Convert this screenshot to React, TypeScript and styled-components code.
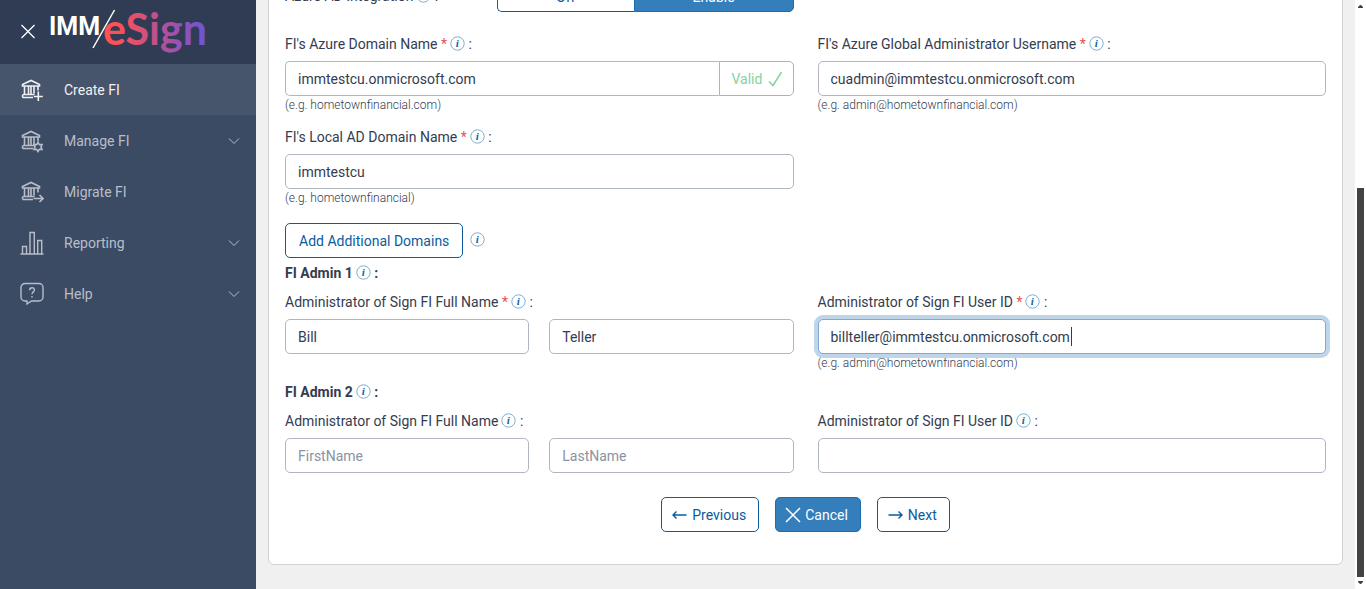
import React from "react";
import styled, { createGlobalStyle, css } from "styled-components";

const GlobalStyle = createGlobalStyle`
  *, *::before, *::after { box-sizing: border-box; }
  body {
    margin: 0;
    background: #f0f0f0;
    color: #343c50;
    font: 400 14px/20px Roboto, "Liberation Sans", sans-serif;
  }
  button, input { font: inherit; }
`;

const Shell = styled.div`
  display: flex;
  height: 100vh;
  overflow: hidden;
`;

const Sidebar = styled.aside`
  flex: 0 0 256px;
  background: #3c4b64;
`;

const Brand = styled.header`
  display: flex;
  align-items: center;
  height: 64px;
  padding-left: 20px;
  background: #303c54;
`;

const CloseButton = styled.button`
  display: flex;
  width: 16px;
  height: 16px;
  padding: 0;
  border: 0;
  background: none;
  color: #fff;
`;

const Logo = styled.svg`
  margin-left: 12px;
`;

const NavItem = styled.a<{ $active?: boolean }>`
  display: flex;
  align-items: center;
  height: 51px;
  padding: 0 16px 0 20px;
  color: ${(p) => (p.$active ? "#f0f1f4" : "#b8bec9")};
  background: ${(p) => (p.$active ? "#46546c" : "transparent")};
  text-decoration: none;
`;

const NavText = styled.span`
  flex: 1;
  margin-left: 20px;
`;

const Main = styled.main`
  flex: 1;
  display: flex;
  flex-direction: column;
  justify-content: flex-end;
  min-width: 0;
  padding: 0 12px 24px;
`;

const Card = styled.form`
  padding: 16px 16px 32px;
  background: #fff;
  border: 1px solid #d0d2d6;
  border-radius: 6px;
`;

const Columns = styled.div<{ $top?: number }>`
  display: grid;
  grid-template-columns: 1fr 1fr;
  column-gap: 24px;
  margin-top: ${(p) => p.$top ?? 0}px;
`;

const Label = styled.label`
  display: flex;
  align-items: center;
  height: 24px;
  margin-bottom: 5px;
  white-space: pre;
`;

const ToggleField = styled.div`
  display: grid;
  grid-template-columns: 5fr 7fr;
  align-items: center;
  ${Label} { margin-bottom: 2px; }
`;

const Toggle = styled.div`
  display: grid;
  grid-template-columns: 137fr 160fr;
`;

const buttonBase = css`
  height: 35px;
  border: 1px solid #0a5c9e;
  border-radius: 5px;
  background: #fff;
  color: #0a5c9e;
`;

const primary = css`
  background: #337ebb;
  border-color: #1c6cae;
  color: #fff;
`;

const ToggleButton = styled.button<{ $on?: boolean }>`
  ${buttonBase}
  ${(p) => (p.$on ? primary : "")}
  height: 30px;
  border-radius: ${(p) => (p.$on ? "0 5px 5px 0" : "5px 0 0 5px")};
  ${(p) => (p.$on ? "" : "border-right: 0;")}
`;

const Required = styled.span`
  color: #e55353;
`;

const SectionTitle = styled.h2<{ $top: number }>`
  display: flex;
  align-items: center;
  height: 24px;
  margin: ${(p) => p.$top}px 0 5px;
  font-size: 14px;
  font-weight: 700;
  white-space: pre;
`;

const InfoMark = styled.svg`
  flex: none;
  margin: 0 0 2px 3px;
`;

const Input = styled.input`
  display: block;
  width: 100%;
  min-width: 0;
  height: 35px;
  padding: 0 12px;
  border: 1px solid #b1b7c1;
  border-radius: 5px;
  background: #fff;
  color: #343c50;
  outline: 0;
  &::placeholder { color: #8a93a2; opacity: 1; }
  &:focus {
    border-color: #7fabd3;
    box-shadow: 0 0 0 4px #bfd6ea;
  }
`;

const CaretField = styled.div`
  position: relative;
  ${Input} { caret-color: transparent; }
`;

const Caret = styled.span`
  position: absolute;
  top: 8px;
  left: 253px;
  width: 1px;
  height: 19px;
  background: #343c50;
`;

const InputGroup = styled.div`
  display: flex;
  ${Input} {
    flex: 1;
    border-right: 0;
    border-radius: 5px 0 0 5px;
  }
`;

const Valid = styled.span`
  display: flex;
  align-items: center;
  gap: 6px;
  width: 75px;
  padding-left: 12px;
  border: 1px solid #7fd09b;
  border-radius: 0 5px 5px 0;
  color: #83d49e;
`;

const Hint = styled.small`
  display: block;
  height: 18px;
  font-size: 12px;
  line-height: 18px;
  font-weight: 300;
`;

const NameRow = styled.div`
  display: grid;
  grid-template-columns: 1fr 1fr;
  gap: 20px;
`;

const DomainRow = styled.div`
  display: flex;
  align-items: center;
  gap: 4px;
  margin-top: 16px;
`;

const Button = styled.button<{ $primary?: boolean }>`
  ${buttonBase}
  ${(p) => (p.$primary ? primary : "")}
  display: flex;
  align-items: center;
  gap: 4px;
  padding: 0 12px 0 9px;
`;

const PlainButton = styled.button`
  ${buttonBase}
  padding: 0 13px;
`;

const Actions = styled.div`
  display: flex;
  justify-content: center;
  gap: 16px;
  margin-top: 24px;
`;

const ScrollTrack = styled.div`
  flex: 0 0 11px;
  display: flex;
  flex-direction: column;
  align-items: center;
  justify-content: space-between;
  padding: 4px 0;
  background: #fff;
`;

const ScrollThumb = styled.div`
  width: 7px;
  height: 67%;
  margin: auto 0 4px;
  background: #424242;
`;

const Info = () => (
  <InfoMark width="15" height="15" viewBox="0 0 15 15" aria-hidden="true">
    <circle cx="7.5" cy="7.5" r="6.7" fill="none" stroke="#7fafcc" strokeWidth="1" />
    <text x="7.3" y="11" textAnchor="middle" fontFamily="Liberation Serif, serif" fontSize="11" fontWeight="700" fontStyle="italic" fill="#0a66a8">i</text>
  </InfoMark>
);

type LabelProps = { htmlFor?: string; required?: boolean; children: string };
const FieldLabel = ({ htmlFor, required, children }: LabelProps) => (
  <Label htmlFor={htmlFor}>
    {children}
    {required && <Required> *</Required>}
    <Info /> :
  </Label>
);

const Bank = ({ kind }: { kind: "add" | "manage" | "migrate" }) => (
  <svg width="24" height="24" viewBox="0 0 24 24" fill="none" stroke="currentColor" strokeWidth="1.6">
    <path d="M2.500 8V6.600L11 2.500l8.500 4.100V8zM4.500 8v8.500M8.500 8v8.500M11 8v8.500M14 8v7.500M18 8v4.500M3 16.500h11.500M2.500 19.500h10.500M2.600 16.500v3" />
    {kind === "add" && <path d="M18.300 13.500v9.500M13.800 18.500h9" />}
    {kind === "migrate" && <path d="M13.500 18.500h9.500M19.500 15l3.500 3.500-3.500 3.500" />}
    {kind === "manage" && (
      <path d="M18 13.500l1.400 2.100 2.600-.1-1 2.500 1 2.500-2.600-.1L18 22.500l-1.400-2.100-2.600.1 1-2.500-1-2.500 2.600.1z" />
    )}
  </svg>
);

const Chart = () => (
  <svg width="24" height="24" viewBox="0 0 24 24" fill="none" stroke="currentColor" strokeWidth="1.4">
    <path d="M.5 23h23M2.500 23v-7.500h4V23M10 23V1.500h4.300V23M17.700 23V9.500h4V23" />
  </svg>
);

const Help = () => (
  <svg width="24" height="24" viewBox="0 0 24 24" fill="none" stroke="currentColor" strokeWidth="1.4">
    <path d="M5 1.500h14a4 4 0 0 1 4 4v9.500a4 4 0 0 1-4 4h-7.500l-4.500 3v-3H5a4 4 0 0 1-4-4V5.500a4 4 0 0 1 4-4z" />
    <path d="M9.700 8.200c0-3.300 4.800-3.200 4.700-.2 0 1.900-2.400 1.900-2.400 4.300M12 14v1.500" />
  </svg>
);

const Chevron = () => (
  <svg width="12" height="12" viewBox="0 0 12 12" fill="none" stroke="currentColor" strokeWidth="1">
    <path d="M1 3.500l5 5 5-5" />
  </svg>
);

const Arrow = ({ left }: { left?: boolean }) => (
  <svg width="17" height="16" viewBox="0 0 17 16" fill="none" stroke="currentColor" strokeWidth="1.400">
    <path d={left ? "M15.500 8H2M5.500 4.500L2 8l3.500 3.500" : "M1.500 8H15M11.500 4.500L15 8l-3.500 3.500"} />
  </svg>
);

const nav = [
  { text: "Create FI", icon: <Bank kind="add" />, active: true },
  { text: "Manage FI", icon: <Bank kind="manage" />, more: true },
  { text: "Migrate FI", icon: <Bank kind="migrate" /> },
  { text: "Reporting", icon: <Chart />, more: true },
  { text: "Help", icon: <Help />, more: true },
];

export default function App() {
  return (
    <>
      <GlobalStyle />
      <Shell>
        <Sidebar>
          <Brand>
            <CloseButton aria-label="Close menu">
              <svg width="16" height="16" viewBox="0 0 16 16" stroke="currentColor" strokeWidth="1.300">
                <path d="M1.500 1l13 13M14.500 1l-13 13" />
              </svg>
            </CloseButton>
            <Logo width="180" height="64" viewBox="0 0 180 64" role="img" aria-label="IMM eSign">
              <defs>
                <linearGradient id="sign" gradientUnits="userSpaceOnUse" x1="56" y1="0" x2="158" y2="0">
                  <stop offset="0.15" stopColor="#ff5055" />
                  <stop offset="0.6" stopColor="#b0509f" />
                  <stop offset="1" stopColor="#6a55d8" />
                </linearGradient>
              </defs>
              <text x="1" y="35" fontFamily="Roboto, sans-serif" fontWeight="700" fontSize="25" fill="#fff">IMM</text>
              <path d="M66.500 10L45 48" stroke="#fff" strokeWidth="1.500" />
              <text x="55" y="45" fontFamily="Lato, sans-serif" fontWeight="700" fontSize="43" fill="url(#sign)">eSign</text>
            </Logo>
          </Brand>
          <nav>
            {nav.map((item) => (
              <NavItem key={item.text} href="#" $active={item.active}>
                {item.icon}
                <NavText>{item.text}</NavText>
                {item.more && <Chevron />}
              </NavItem>
            ))}
          </nav>
        </Sidebar>

        <Main>
          <Card>
            <Columns>
              <ToggleField>
                <FieldLabel>Azure AD Integration</FieldLabel>
                <Toggle>
                  <ToggleButton type="button">Off</ToggleButton>
                  <ToggleButton type="button" $on>Enable</ToggleButton>
                </Toggle>
              </ToggleField>
            </Columns>

            <Columns $top={20}>
              <div>
                <FieldLabel htmlFor="azure" required>FI's Azure Domain Name</FieldLabel>
                <InputGroup>
                  <Input id="azure" defaultValue="immtestcu.onmicrosoft.com" />
                  <Valid>
                    Valid
                    <svg width="15" height="16" viewBox="0 0 15 16" fill="none" stroke="currentColor" strokeWidth="1.500">
                      <path d="M1 10.500l4 4L13.500 1" />
                    </svg>
                  </Valid>
                </InputGroup>
                <Hint>(e.g. hometownfinancial.com)</Hint>
              </div>
              <div>
                <FieldLabel htmlFor="global" required>FI's Azure Global Administrator Username</FieldLabel>
                <Input id="global" defaultValue="cuadmin@immtestcu.onmicrosoft.com" />
                <Hint>(e.g. admin@hometownfinancial.com)</Hint>
              </div>
            </Columns>

            <Columns $top={11}>
              <div>
                <FieldLabel htmlFor="local" required>FI's Local AD Domain Name</FieldLabel>
                <Input id="local" defaultValue="immtestcu" />
                <Hint>(e.g. hometownfinancial)</Hint>
              </div>
            </Columns>

            <DomainRow>
              <PlainButton type="button">Add Additional Domains</PlainButton>
              <Info />
            </DomainRow>

            <SectionTitle $top={3}>FI Admin 1<Info /> :</SectionTitle>
            <Columns>
              <div>
                <FieldLabel htmlFor="first1" required>Administrator of Sign FI Full Name</FieldLabel>
                <NameRow>
                  <Input id="first1" defaultValue="Bill" />
                  <Input aria-label="Last name" defaultValue="Teller" />
                </NameRow>
              </div>
              <div>
                <FieldLabel htmlFor="user1" required>Administrator of Sign FI User ID</FieldLabel>
                <CaretField>
                  <Input id="user1" defaultValue="billteller@immtestcu.onmicrosoft.com" autoFocus />
                  <Caret />
                </CaretField>
                <Hint>(e.g. admin@hometownfinancial.com)</Hint>
              </div>
            </Columns>

            <SectionTitle $top={8}>FI Admin 2<Info /> :</SectionTitle>
            <Columns>
              <div>
                <FieldLabel htmlFor="first2">Administrator of Sign FI Full Name</FieldLabel>
                <NameRow>
                  <Input id="first2" placeholder="FirstName" />
                  <Input aria-label="Last name" placeholder="LastName" />
                </NameRow>
              </div>
              <div>
                <FieldLabel htmlFor="user2">Administrator of Sign FI User ID</FieldLabel>
                <Input id="user2" />
              </div>
            </Columns>

            <Actions>
              <Button type="button"><Arrow left />Previous</Button>
              <Button type="button" $primary>
                <svg width="16" height="16" viewBox="0 0 16 16" stroke="currentColor" strokeWidth="1.500">
                  <path d="M1 1l14 14M15 1L1 15" />
                </svg>
                Cancel
              </Button>
              <Button type="button"><Arrow />Next</Button>
            </Actions>
          </Card>
        </Main>

        <ScrollTrack aria-hidden="true">
          <svg width="5" height="4" viewBox="0 0 5 4"><path d="M0 4V3l2-2h1l2 2v1z" fill="#424242" /></svg>
          <ScrollThumb />
          <svg width="5" height="4" viewBox="0 0 5 4"><path d="M0 0v1l2 2h1l2-2V0z" fill="#424242" /></svg>
        </ScrollTrack>
      </Shell>
    </>
  );
}
